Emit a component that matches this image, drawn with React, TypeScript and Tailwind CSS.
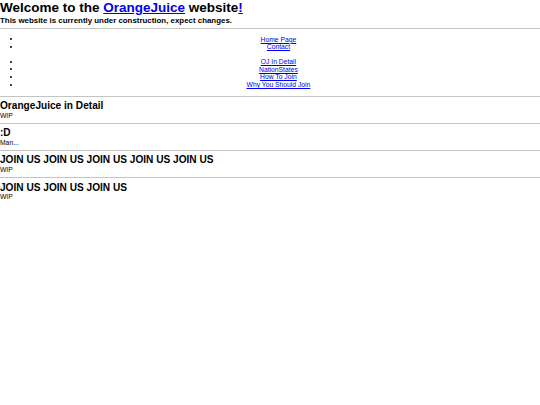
const link = "text-[#0000ee] underline";

function Item({ label }: { label: string }) {
  return (
    <li className="relative text-center">
      <span className="absolute left-[-6.6px] top-[2.7px] h-[2px] w-[2px] rounded-full bg-black" />
      <a href="#" className={link}>{label}</a>
    </li>
  );
}

export default function App() {
  const sections = [
    { title: "OrangeJuice in Detail", body: "WIP" },
    { title: ":D", body: "Man..." },
    { title: "JOIN US JOIN US JOIN US JOIN US JOIN US", body: "WIP" },
    { title: "JOIN US JOIN US JOIN US", body: "WIP" },
  ];

  return (
    <div className="min-h-screen bg-white text-black font-['Liberation_Sans',Arial,sans-serif] text-[6.75px] leading-[1.15]">
      <h1 className="m-0 text-[13.5px] font-bold leading-[1.15]">
        Welcome to the <a href="#" className={link}>OrangeJuice</a> website
        <a href="#" className={link}>!</a>
      </h1>
      <h3 className="m-0 text-[7.9px] font-bold leading-[1.15]">
        This website is currently under construction, expect changes.
      </h3>
      <hr className="my-[3.4px] h-px border-0 bg-[#c4c4c4]" />
      <ul className="my-[6.75px] list-none pl-[16.9px]">
        <Item label="Home Page" />
        <Item label="Contact" />
      </ul>
      <ul className="my-[6.75px] list-none pl-[16.9px]">
        <Item label="OJ In Detail" />
        <Item label="NationStates" />
        <Item label="How To Join" />
        <Item label="Why You Should Join" />
      </ul>
      {sections.map((s, i) => (
        <div key={i}>
          <hr className="my-[3.4px] h-px border-0 bg-[#c4c4c4]" />
          <h2 className="m-0 text-[10.125px] font-bold leading-[1.15]">{s.title}</h2>
          <p className="m-0">{s.body}</p>
        </div>
      ))}
    </div>
  );
}
